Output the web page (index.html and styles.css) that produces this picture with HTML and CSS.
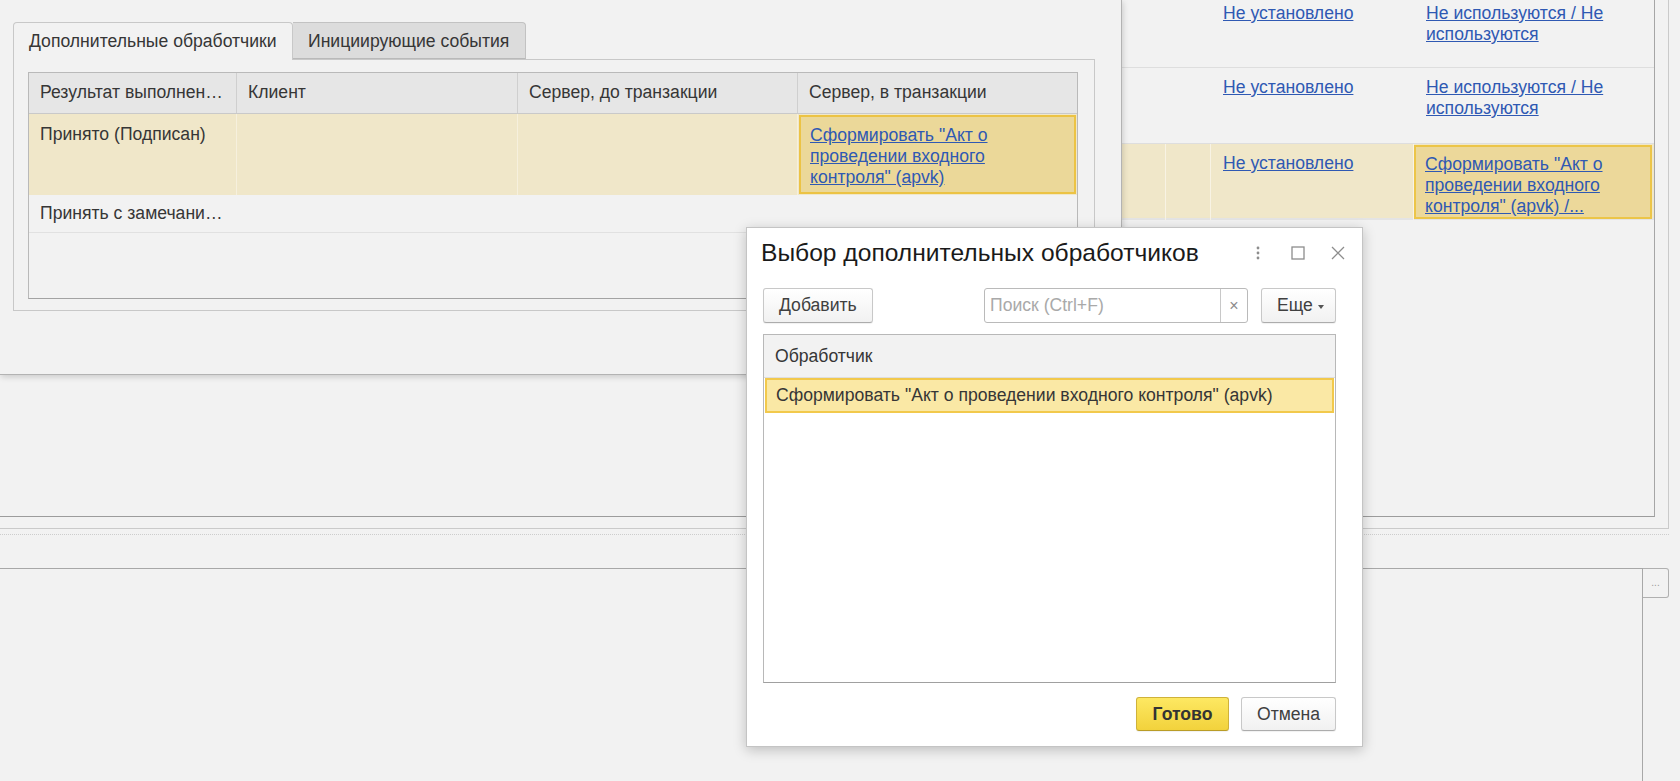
FILE: index.html
```html
<!DOCTYPE html>
<html lang="ru">
<head>
    <meta charset="UTF-8">
    <meta name="viewport" content="width=device-width, initial-scale=1.0">
    <title>Выбор дополнительных обработчиков</title>
    <link rel="stylesheet" href="styles.css">
</head>
<body>
    <div class="desktop">
        <!-- Main form: document states list -->
        <div class="main-form">
            <div class="states-grid">
                <div class="state-row">
                    <div class="cell"></div>
                    <div class="cell"></div>
                    <div class="cell"><a href="#">Не установлено</a></div>
                    <div class="cell"><a href="#">Не используются / Не используются</a></div>
                </div>
                <div class="state-row">
                    <div class="cell"></div>
                    <div class="cell"></div>
                    <div class="cell"><a href="#">Не установлено</a></div>
                    <div class="cell"><a href="#">Не используются / Не используются</a></div>
                </div>
                <div class="state-row current">
                    <div class="cell"></div>
                    <div class="cell"></div>
                    <div class="cell"><a href="#">Не установлено</a></div>
                    <div class="cell active"><a href="#">Сформировать "Акт о проведении входного контроля" (apvk) /...</a></div>
                </div>
            </div>
        </div>
        <div class="splitter"></div>
        <div class="memo-row">
            <div class="memo"></div>
            <button class="memo-btn">...</button>
        </div>

        <!-- State settings window -->
        <div class="state-window">
            <div class="tabs">
                <div class="tab selected">Дополнительные обработчики</div>
                <div class="tab">Инициирующие события</div>
            </div>
            <div class="tab-panel">
                <div class="handlers">
                    <div class="handlers-head">
                        <div class="cell">Результат выполнен…</div>
                        <div class="cell">Клиент</div>
                        <div class="cell">Сервер, до транзакции</div>
                        <div class="cell">Сервер, в транзакции</div>
                    </div>
                    <div class="handlers-row current">
                        <div class="cell">Принято (Подписан)</div>
                        <div class="cell"></div>
                        <div class="cell"></div>
                        <div class="cell active"><a href="#">Сформировать "Акт о проведении входного контроля" (apvk)</a></div>
                    </div>
                    <div class="handlers-row">
                        <div class="cell">Принять с замечани…</div>
                        <div class="cell"></div>
                        <div class="cell"></div>
                        <div class="cell"></div>
                    </div>
                </div>
            </div>
        </div>

        <!-- Handler picker dialog -->
        <div class="dialog">
            <div class="dialog-head">
                <h1 class="dialog-title">Выбор дополнительных обработчиков</h1>
                <div class="head-tools">
                    <svg width="14" height="14" viewBox="0 0 14 14"><circle cx="7" cy="2" r="1.4"/><circle cx="7" cy="7" r="1.4"/><circle cx="7" cy="12" r="1.4"/></svg>
                    <svg width="14" height="14" viewBox="0 0 14 14"><rect x="1" y="1" width="12" height="12" fill="none" stroke-width="1.3"/></svg>
                    <svg width="14" height="14" viewBox="0 0 14 14"><path d="M1 1L13 13M13 1L1 13" fill="none" stroke-width="1.3"/></svg>
                </div>
            </div>
            <div class="toolbar">
                <button class="btn">Добавить</button>
                <div class="search">
                    <span class="search-input">Поиск (Ctrl+F)</span>
                    <span class="search-clear">×</span>
                </div>
                <button class="btn more">Еще <span class="caret"></span></button>
            </div>
            <div class="picker-list">
                <div class="picker-head">Обработчик</div>
                <div class="picker-row active">Сформировать "Акт о проведении входного контроля" (apvk)</div>
            </div>
            <div class="dialog-footer">
                <button class="btn primary">Готово</button>
                <button class="btn">Отмена</button>
            </div>
        </div>
    </div>
</body>
</html>
```

FILE: styles.css
```css
/* Basic Reset */
* {
    margin: 0;
    padding: 0;
    box-sizing: border-box;
}

body {
    font-family: "Liberation Sans", Arial, sans-serif;
    font-size: 17.6px;
    line-height: 21px;
    color: #363636;
    background: #f2f2f2;
    overflow: hidden;
}

a {
    color: #2f59b3;
    text-decoration: underline;
}

button {
    font: inherit;
    color: inherit;
}

.desktop {
    position: relative;
    width: 1680px;
    height: 781px;
    display: flex;
    flex-direction: column;
}

/* Main form */
.main-form {
    width: 1669px;
    height: 529px;
    border-right: 1px solid #cacaca;
    border-bottom: 1px solid #cacaca;
    flex: none;
}

.states-grid {
    width: 1655px;
    height: 517px;
    border-right: 1px solid #a6a6a6;
    border-bottom: 1px solid #9c9c9c;
    overflow: hidden;
}

.state-row {
    display: grid;
    grid-template-columns: 1166px 45px 203px 1fr;
    height: 76px;
    border-bottom: 1px solid #dedede;
}

.state-row .cell {
    padding: 9px 11px 0 12px;
}

.state-row:first-child {
    margin-top: -8px;
}

.state-row:first-child .cell {
    padding-top: 11px;
}

.state-row.current {
    height: 76px;
    background: #f0e7c9;
    border-bottom: 2px solid #e4e4e4;
}

.state-row.current .cell {
    border-right: 1px solid #f8f3e4;
}

.state-row .cell.active {
    margin: 1px 2px 1px 0;
    padding: 7px 9px 0 9px;
    border: 2px solid #ecc548;
    background: #ecd89a;
}

.splitter {
    width: 1669px;
    margin-top: 5px;
    border-top: 1px dotted #cdcdcd;
}

.memo-row {
    display: flex;
    flex: 1;
    margin-top: 33px;
}

.memo {
    width: 1643px;
    border-top: 1px solid #a8a8a8;
    border-right: 1px solid #a8a8a8;
}

.memo-btn {
    width: 26px;
    height: 30px;
    border: 1px solid #b0b0b0;
    border-left: none;
    border-radius: 0 3px 3px 0;
    background: #f2f2f2;
    color: #9a9a9a;
    font-size: 10px;
    line-height: 20px;
}

/* State settings window */
.state-window {
    position: absolute;
    left: 0;
    top: 0;
    width: 1122px;
    height: 375px;
    padding: 22px 26px 0 13px;
    background: #f2f2f2;
    border-right: 1px solid #b3b3b3;
    border-bottom: 1px solid #b3b3b3;
    box-shadow: 1px 2px 6px rgba(0, 0, 0, 0.16);
}

.tabs {
    display: flex;
    height: 37px;
    position: relative;
    z-index: 1;
}

.tab {
    width: 233px;
    height: 37px;
    padding: 8px 15px 0;
    background: #dcdcdc;
    border: 1px solid #c2c2c2;
    border-left: none;
    border-bottom: 1px solid #b9b9b9;
    border-radius: 0 4px 0 0;
    white-space: nowrap;
}

.tab.selected {
    width: 280px;
    height: 38px;
    background: #f2f2f2;
    border: 1px solid #c8c8c8;
    border-bottom: none;
    border-radius: 4px 4px 0 0;
}

.tab-panel {
    width: 1082px;
    height: 252px;
    padding: 12px 16px 12px 14px;
    border: 1px solid #c8c8c8;
}

.handlers {
    height: 227px;
    border: 1px solid #b9b9b9;
    border-bottom-color: #a3a3a3;
}

.handlers-head,
.handlers-row {
    display: grid;
    grid-template-columns: 208px 281px 280px 1fr;
}

.handlers-head {
    height: 41px;
    background: #e6e6e6;
    border-bottom: 1px solid #c9c9c9;
}

.handlers-head .cell {
    padding: 9px 11px 0;
    border-right: 1px solid #cfcfcf;
    white-space: nowrap;
}

.handlers-head .cell:last-child {
    border-right: none;
}

.handlers-row {
    height: 38px;
    border-bottom: 1px solid #e1e1e1;
}

.handlers-row .cell {
    padding: 8px 11px 0;
    white-space: nowrap;
}

.handlers-row.current {
    height: 81px;
    background: #f0e7c9;
    border-bottom: none;
}

.handlers-row.current .cell {
    padding-top: 10px;
    border-right: 1px solid #f6f0dd;
    white-space: normal;
}

.handlers-row .cell.active {
    margin: 1px 1px 1px 1px;
    padding: 8px 9px 0 9px;
    border: 2px solid #ecc344;
    background: #ebd899;
}

/* Handler picker dialog */
.dialog {
    position: absolute;
    left: 746px;
    top: 227px;
    width: 617px;
    height: 520px;
    padding: 0 26px 15px 16px;
    background: #ffffff;
    border: 1px solid #c4c4c4;
    box-shadow: 0 3px 12px rgba(0, 0, 0, 0.22);
    display: flex;
    flex-direction: column;
}

.dialog-head {
    display: flex;
    align-items: center;
    height: 50px;
    margin-right: -9px;
}

.dialog-title {
    font-size: 24.6px;
    font-weight: normal;
    color: #1a1a1a;
    line-height: 30px;
    margin-left: -2px;
}

.head-tools {
    display: flex;
    gap: 26px;
    margin-left: auto;
    fill: #8d8d8d;
    stroke: #8d8d8d;
}

.head-tools svg:first-child {
    stroke: none;
}

.toolbar {
    display: flex;
    height: 35px;
    margin-top: 10px;
}

.btn {
    padding: 0 15px;
    background: linear-gradient(#ffffff, #f1f1f1);
    border: 1px solid #c8c8c8;
    border-bottom-color: #acacac;
    border-radius: 3px;
    box-shadow: 0 1px 1px rgba(0, 0, 0, 0.06);
    color: #404040;
    white-space: nowrap;
}

.search {
    display: flex;
    width: 264px;
    margin-left: auto;
    margin-right: 13px;
    border: 1px solid #bababa;
    border-radius: 3px;
}

.search-input {
    flex: 1;
    padding: 6px 5px 0;
    color: #a9a9a9;
}

.search-clear {
    width: 27px;
    border-left: 1px solid #c8c8c8;
    color: #8c8c8c;
    font-size: 16px;
    text-align: center;
    line-height: 33px;
}

.btn.more {
    width: 75px;
    padding: 0 0 0 15px;
    text-align: left;
    display: flex;
    align-items: center;
    gap: 5px;
}

.caret {
    width: 0;
    height: 0;
    border-left: 3.5px solid transparent;
    border-right: 3.5px solid transparent;
    border-top: 4px solid #555555;
    margin-top: 3px;
}

.picker-list {
    flex: 1;
    margin-top: 11px;
    border: 1px solid #b8b8b8;
    border-bottom-color: #a0a0a0;
}

.picker-head {
    height: 43px;
    padding: 11px 11px 0;
    background: #f2f2f2;
    border-bottom: 1px solid #dedede;
}

.picker-row {
    height: 35px;
    padding: 5px 9px 0;
    white-space: nowrap;
}

.picker-row.active {
    margin: 0 1px;
    border: 2px solid #f2c94c;
    background: #fae8a5;
}

.dialog-footer {
    display: flex;
    justify-content: flex-end;
    gap: 12px;
    margin-top: 14px;
}

.dialog-footer .btn {
    height: 34px;
    width: 95px;
}

.btn.primary {
    width: 93px;
    background: linear-gradient(#fde862, #f2d23c);
    border-color: #cfb23a;
    border-bottom-color: #b99c26;
    color: #333333;
    font-weight: bold;
}
```
